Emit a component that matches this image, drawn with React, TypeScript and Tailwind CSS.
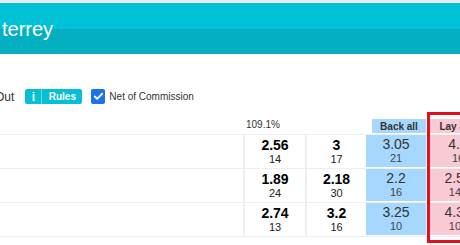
import { Check } from "lucide-react";

const rows = [
  { a: ["2.56", "14"], b: ["3", "17"], back: ["3.05", "21"], lay: ["4.1", "16"] },
  { a: ["1.89", "24"], b: ["2.18", "30"], back: ["2.2", "16"], lay: ["2.52", "145"] },
  { a: ["2.74", "13"], b: ["3.2", "16"], back: ["3.25", "10"], lay: ["4.36", "103"] },
];

function Price({ odds, size, bold }: { odds: string; size: string; bold?: boolean }) {
  return (
    <div className="flex flex-col items-center justify-center h-full">
      <span className={`text-[14px] leading-[14px] ${bold ? "font-bold text-black" : "text-[#333]"}`}>{odds}</span>
      <span className={`text-[11px] leading-[13px] mt-[1px] ${bold ? "text-[#222]" : "text-[#444]"}`}>{size}</span>
    </div>
  );
}

export default function App() {
  return (
    <div className="relative w-[460px] h-[245px] overflow-hidden bg-white font-['Liberation_Sans',Arial,sans-serif]">
      <div className="h-[3px] bg-[#ebebeb]" />
      {/* market header */}
      <div className="h-[51px] flex items-center pl-[2px] bg-[linear-gradient(#00c2d6_0_26px,#03afc0_26px)]">
        <span className="text-white text-[20px] leading-[20px]">terrey</span>
      </div>

      {/* toolbar */}
      <div className="mt-[35px] h-[15px] flex items-center">
        <span className="-ml-[5px] text-[12px] text-[#333]">Out</span>
        <div className="ml-[11px] h-[15px] flex rounded-[2px] overflow-hidden bg-[#06bfd2] text-white font-bold">
          <span className="w-[16px] flex items-center justify-center text-[12px]">i</span>
          <span className="w-px bg-[#6dd6e2]" />
          <span className="w-[40px] flex items-center justify-center text-[10px]">Rules</span>
        </div>
        <div className="ml-[9px] w-[14px] h-[15px] rounded-[2px] bg-[#1a73e8] flex items-center justify-center">
          <Check className="w-[11px] h-[11px] text-white" strokeWidth={4} />
        </div>
        <span className="ml-[4px] text-[10px] text-[#333]">Net of Commission</span>
      </div>

      {/* table header */}
      <div className="mt-[15px] h-[15px] flex items-start">
        <div className="w-[243px] shrink-0" />
        <div className="w-[62px] shrink-0 pl-[3px] text-[10px] leading-[12px] text-[#333]">109.1%</div>
        <div className="w-[61px] shrink-0" />
        <div className="w-[60px] shrink-0 pl-[6px]">
          <div className="h-[14px] bg-[#a6d8ff] flex items-center justify-center text-[10px] font-bold text-[#333]">Back all</div>
        </div>
        <div className="ml-[2px] w-[54px] shrink-0 h-[14px] bg-[#f9c9d4] flex items-center justify-center text-[10px] font-bold text-[#333]">
          Lay all
        </div>
      </div>

      {/* runners */}
      <div className="border-b border-[#edf0f1]">
        {rows.map((r, i) => (
          <div key={i} className="flex h-[34px] border-t border-[#edf0f1]">
            <div className="w-[243px] shrink-0" />
            <div className="w-[62px] shrink-0 border-l-2 border-[#edf0f1]">
              <Price odds={r.a[0]} size={r.a[1]} bold />
            </div>
            <div className="w-[61px] shrink-0 border-l-2 border-[#edf0f1]">
              <Price odds={r.b[0]} size={r.b[1]} bold />
            </div>
            <div className="w-[60px] shrink-0 mb-[1px] bg-[#a6d8ff]">
              <Price odds={r.back[0]} size={r.back[1]} />
            </div>
            <div className="ml-[2px] w-[60px] shrink-0 mb-[1px] bg-[#f9c9d4]">
              <Price odds={r.lay[0]} size={r.lay[1]} />
            </div>
          </div>
        ))}
      </div>

      {/* highlight */}
      <div className="absolute left-[427px] top-[112px] w-[70px] h-[131px] border-[3px] border-[#e2101c]" />
    </div>
  );
}
